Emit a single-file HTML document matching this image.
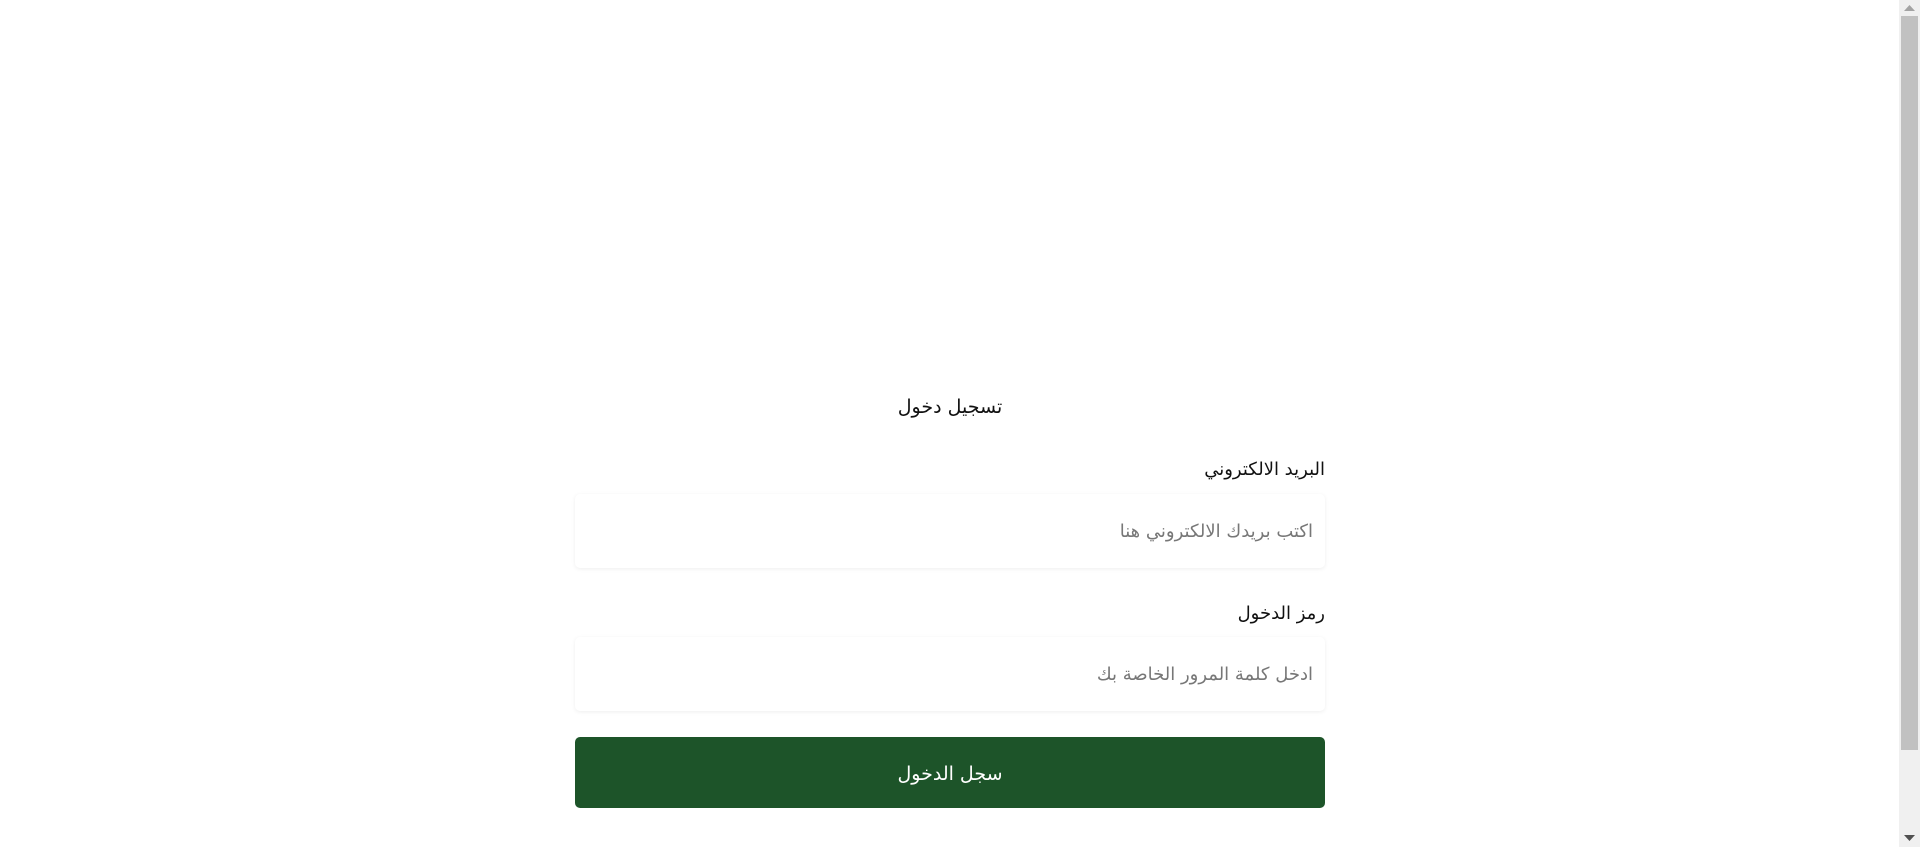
<!DOCTYPE html>
<html dir="rtl"><head><meta charset="utf-8"><style>
html,body{margin:0;padding:0;background:#fff;width:1920px;height:847px;overflow:hidden;font-family:"DejaVu Sans","Liberation Sans",sans-serif;}
.a{position:absolute;}
.h{left:575px;width:750px;top:396px;text-align:center;font-size:19px;color:#111;}
.lbl{right:595px;font-size:18px;color:#111;}
.inp{left:575px;width:750px;background:#fff;border-radius:5px;box-shadow:0 1px 4px rgba(0,0,0,0.07);}
.ph{position:absolute;right:12px;font-size:18px;color:#777;}
.btn{left:575px;width:750px;top:737px;height:71px;background:#1d5429;border-radius:5px;color:#fff;text-align:center;line-height:75px;font-size:19px;}
.sb{right:0;top:0;width:21px;height:847px;background:#f0f0f0;}
.th{right:2px;top:16px;width:17px;height:734px;background:#c1c1c1;}
</style></head><body>
<div class="a h">تسجيل دخول</div>
<div class="a lbl" style="top:459px">البريد الالكتروني</div>
<div class="a inp" style="top:494px;height:74px"><span class="ph" style="top:27px">اكتب بريدك الالكتروني هنا</span></div>
<div class="a lbl" style="top:603px">رمز الدخول</div>
<div class="a inp" style="top:637px;height:74px"><span class="ph" style="top:27px">ادخل كلمة المرور الخاصة بك</span></div>
<div class="a btn">سجل الدخول</div>
<div class="a sb"></div>
<div class="a th"></div>
<svg class="a" style="right:5px;top:5px" width="11" height="6"><path d="M0 6L5.5 0L11 6Z" fill="#a3a3a3"/></svg>
<svg class="a" style="right:5px;top:835px" width="11" height="6"><path d="M0 0L5.5 6L11 0Z" fill="#505050"/></svg>
</body></html>
